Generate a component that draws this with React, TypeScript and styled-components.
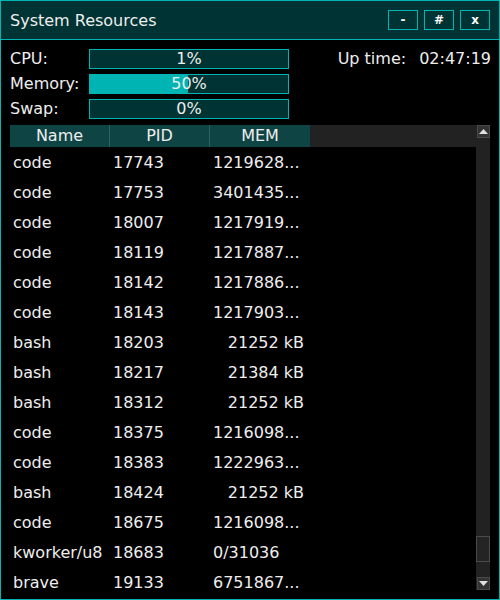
import React from "react";
import styled, { createGlobalStyle } from "styled-components";

const Global = createGlobalStyle`
  html, body { margin: 0; padding: 0; background: #000; }
  * { box-sizing: border-box; }
  body { font-family: "DejaVu Sans", "Liberation Sans", sans-serif; font-size: 16px; color: #eeeeee; }
`;

const CYAN = "#00b4b4";
const TEAL = "#003333";

const Window = styled.div`
  width: 500px;
  height: 600px;
  border: 1px solid ${CYAN};
  background: #000;
  display: flex;
  flex-direction: column;
  overflow: hidden;
`;

const TitleBar = styled.div`
  height: 39px;
  flex: none;
  background: ${TEAL};
  border-bottom: 1px solid ${CYAN};
  display: flex;
  align-items: center;
  padding: 0 9px 0 9px;
`;

const Title = styled.div`
  flex: 1;
  font-size: 16px;
  color: #eeeeee;
`;

const WinButtons = styled.div`
  display: flex;
  gap: 6px;
  margin-top: -1px;
`;

const WinButton = styled.div`
  width: 30px;
  height: 20px;
  border: 1px solid ${CYAN};
  display: flex;
  align-items: center;
  justify-content: center;
  font-size: 12px;
  font-weight: bold;
  color: #fff;
`;

const Body = styled.div`
  flex: 1;
  min-height: 0;
  padding: 9px 9px 9px 9px;
  display: flex;
  flex-direction: column;
`;

const Stats = styled.div`
  display: flex;
  justify-content: space-between;
`;

const Meters = styled.div`
  display: grid;
  grid-template-columns: 79px 200px;
  row-gap: 5px;
  align-items: center;
`;

const Label = styled.div`
  height: 20px;
  line-height: 20px;
`;

const Bar = styled.div`
  position: relative;
  height: 20px;
  border: 1px solid ${CYAN};
  background: ${TEAL};
`;

const Fill = styled.div`
  position: absolute;
  left: -1px;
  top: -1px;
  bottom: -1px;
  background: ${CYAN};
`;

const BarText = styled.div`
  position: relative;
  text-align: center;
  line-height: 18px;
  color: #eeeeee;
`;

const Uptime = styled.div`
  display: flex;
  gap: 13px;
  height: 20px;
  line-height: 20px;
  margin-right: -1px;
`;

const Table = styled.div`
  margin-top: 6px;
  flex: 1;
  min-height: 0;
  display: flex;
`;

const List = styled.div`
  flex: 1;
  overflow: hidden;
  display: flex;
  flex-direction: column;
`;

const HeaderRow = styled.div`
  height: 22px;
  flex: none;
  display: flex;
  background: #222222;
`;

const HeadCell = styled.div<{ $sep?: boolean }>`
  width: 100px;
  background: #0f4444;
  border-right: ${(p) => (p.$sep ? "1px solid #2f6363" : "none")};
  text-align: center;
  line-height: 22px;
  color: #eeeeee;
`;

const Row = styled.div`
  height: 30px;
  flex: none;
  display: flex;
  align-items: center;
`;

const Cell = styled.div<{ $right?: boolean }>`
  width: 100px;
  padding: 0 6px 0 3px;
  white-space: nowrap;
  overflow: hidden;
  text-align: ${(p) => (p.$right ? "right" : "left")};
`;

const Scrollbar = styled.div`
  width: 14px;
  background: #222222;
  display: flex;
  flex-direction: column;
  align-items: center;
`;

const ScrollBtn = styled.div`
  width: 13px;
  height: 13px;
  background: #333333;
  border: 1px solid #4a4a4a;
  display: flex;
  align-items: center;
  justify-content: center;
`;

const Track = styled.div`
  flex: 1;
  width: 14px;
  display: flex;
  flex-direction: column;
  justify-content: flex-end;
  padding-bottom: 15px;
`;

const Thumb = styled.div`
  height: 26px;
  width: 14px;
  border: 1px solid #4a4a4a;
  background: #242424;
`;

const Arrow = ({ up }: { up?: boolean }) => (
  <svg width="9" height="5" viewBox="0 0 9 5">
    <polygon points={up ? "0,5 9,5 4.5,0" : "0,0 9,0 4.5,5"} fill="#e0e0e0" />
  </svg>
);

const rows: [string, string, string, boolean][] = [
  ["code", "17743", "1219628...", false],
  ["code", "17753", "3401435...", false],
  ["code", "18007", "1217919...", false],
  ["code", "18119", "1217887...", false],
  ["code", "18142", "1217886...", false],
  ["code", "18143", "1217903...", false],
  ["bash", "18203", "21252 kB", true],
  ["bash", "18217", "21384 kB", true],
  ["bash", "18312", "21252 kB", true],
  ["code", "18375", "1216098...", false],
  ["code", "18383", "1222963...", false],
  ["bash", "18424", "21252 kB", true],
  ["code", "18675", "1216098...", false],
  ["kworker/u8", "18683", "0/31036", false],
  ["brave", "19133", "6751867...", false],
];

const meters = [
  { label: "CPU:", value: 1 },
  { label: "Memory:", value: 50 },
  { label: "Swap:", value: 0 },
];

export default function App() {
  return (
    <>
      <Global />
      <Window>
        <TitleBar>
          <Title>System Resources</Title>
          <WinButtons>
            <WinButton>-</WinButton>
            <WinButton>#</WinButton>
            <WinButton>x</WinButton>
          </WinButtons>
        </TitleBar>
        <Body>
          <Stats>
            <Meters>
              {meters.map((m) => (
                <React.Fragment key={m.label}>
                  <Label>{m.label}</Label>
                  <Bar>
                    <Fill style={{ width: `${m.value === 1 ? 0 : m.value}%` }} />
                    <BarText>{m.value}%</BarText>
                  </Bar>
                </React.Fragment>
              ))}
            </Meters>
            <Uptime>
              <span>Up time:</span>
              <span>02:47:19</span>
            </Uptime>
          </Stats>
          <Table>
            <List>
              <HeaderRow>
                <HeadCell $sep>Name</HeadCell>
                <HeadCell $sep>PID</HeadCell>
                <HeadCell>MEM</HeadCell>
              </HeaderRow>
              {rows.map((r, i) => (
                <Row key={i}>
                  <Cell>{r[0]}</Cell>
                  <Cell>{r[1]}</Cell>
                  <Cell $right={r[3]}>{r[2]}</Cell>
                </Row>
              ))}
            </List>
            <Scrollbar>
              <ScrollBtn>
                <Arrow up />
              </ScrollBtn>
              <Track>
                <Thumb />
              </Track>
              <ScrollBtn>
                <Arrow />
              </ScrollBtn>
            </Scrollbar>
          </Table>
        </Body>
      </Window>
    </>
  );
}
